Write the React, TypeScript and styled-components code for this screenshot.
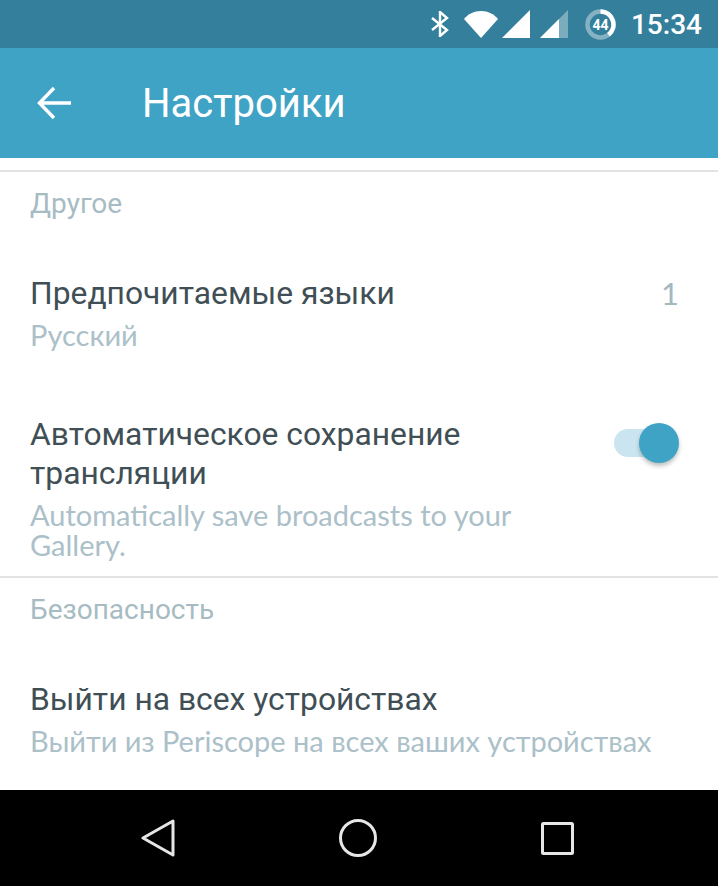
import React from "react";
import styled, { createGlobalStyle } from "styled-components";

const GlobalStyle = createGlobalStyle`
  html, body {
    margin: 0;
    padding: 0;
    background: #fff;
  }
`;

const Screen = styled.div`
  width: 718px;
  height: 886px;
  display: flex;
  flex-direction: column;
  overflow: hidden;
  font-family: Roboto, "Noto Sans", sans-serif;
`;

const StatusBar = styled.div`
  height: 48px;
  flex: none;
  display: flex;
  align-items: center;
  justify-content: flex-end;
  padding-right: 16px;
  background: #34809c;
  color: #fff;
`;

const StatusIcon = styled.svg<{ $gap: number }>`
  flex: none;
  display: block;
  margin-left: ${({ $gap }) => $gap}px;
`;

const Clock = styled.span`
  font-size: 28px;
  font-weight: 500;
  margin-left: 15px;
`;

const Toolbar = styled.header`
  height: 110px;
  flex: none;
  display: flex;
  align-items: center;
  background: #3fa3c5;
  color: #fff;
`;

const BackButton = styled.div`
  width: 142px;
  flex: none;
  display: flex;
  padding-left: 37px;
  box-sizing: border-box;
`;

const Title = styled.h1`
  margin: 0;
  font-size: 40px;
  font-weight: 400;
`;

const Content = styled.main`
  flex: 1;
  padding-top: 12px;
`;

const Section = styled.section`
  border-top: 2px solid #e2e4e4;
  padding: 0 30px;
`;

const SectionTitle = styled.div`
  height: 102px;
  padding-top: 15px;
  box-sizing: border-box;
  font-size: 28px;
  line-height: 34px;
  color: #a7bbc2;
`;

const Row = styled.div<{ $height: number }>`
  height: ${({ $height }) => $height}px;
  display: flex;
  justify-content: space-between;
`;

const RowText = styled.div<{ $wide?: boolean }>`
  width: ${({ $wide }) => ($wide ? "100%" : "530px")};
`;

const RowTitle = styled.div`
  font-size: 31.8px;
  line-height: 39px;
  color: #3f4f55;
`;

const RowHint = styled.div`
  font-family: Lato, Roboto, sans-serif;
  font-size: 29px;
  line-height: 30px;
  margin-top: 7px;
  color: #abc0c8;
`;

const Count = styled.div`
  font-family: Lato, Roboto, sans-serif;
  font-size: 31px;
  line-height: 39px;
  padding-right: 9px;
  color: #a3b8bf;
`;

const Toggle = styled.div`
  position: relative;
  width: 52px;
  height: 28px;
  margin: 14px 22px 0 0;
  border-radius: 14px;
  background: #cbe5f0;
`;

const Knob = styled.div`
  position: absolute;
  top: -6px;
  right: -13px;
  width: 40px;
  height: 40px;
  border-radius: 50%;
  background: #3fa3c5;
  box-shadow: 0 3px 4px rgba(0, 0, 0, 0.25);
`;

const NavBar = styled.nav`
  height: 96px;
  flex: none;
  display: flex;
  align-items: center;
  justify-content: space-between;
  padding: 0 144px 0 141px;
  background: #000;
`;

const Settings: React.FC = () => (
  <Content>
    <Section>
      <SectionTitle>Другое</SectionTitle>
      <Row $height={141}>
        <RowText>
          <RowTitle>Предпочитаемые языки</RowTitle>
          <RowHint>Русский</RowHint>
        </RowText>
        <Count>1</Count>
      </Row>
      <Row $height={161}>
        <RowText>
          <RowTitle>Автоматическое сохранение трансляции</RowTitle>
          <RowHint>Automatically save broadcasts to your Gallery.</RowHint>
        </RowText>
        <Toggle>
          <Knob />
        </Toggle>
      </Row>
    </Section>
    <Section>
      <SectionTitle>Безопасность</SectionTitle>
      <Row $height={109}>
        <RowText $wide>
          <RowTitle>Выйти на всех устройствах</RowTitle>
          <RowHint>Выйти из Periscope на всех ваших устройствах</RowHint>
        </RowText>
      </Row>
    </Section>
  </Content>
);

const App: React.FC = () => (
  <Screen>
    <GlobalStyle />
    <StatusBar>
      <StatusIcon $gap={0} width="18" height="26" viewBox="0 0 18 26" fill="none" stroke="#fff" strokeWidth="2.4">
        <path d="M1 7l15 12-7 6V1l7 6L1 19" />
      </StatusIcon>
      <StatusIcon $gap={15} width="34" height="27" viewBox="0 0 34 27" fill="#fff">
        <path d="M0 8C4 3 10 0 17 0s13 3 17 8L17 27z" />
      </StatusIcon>
      <StatusIcon $gap={4} width="28" height="28" viewBox="0 0 28 28" fill="#fff">
        <path d="M0 28L28 0v28z" />
      </StatusIcon>
      <StatusIcon $gap={10} width="28" height="28" viewBox="0 0 28 28">
        <path d="M0 28L28 0v28z" fill="#fff" fillOpacity="0.35" />
        <path d="M0 28L19 9v19z" fill="#fff" />
      </StatusIcon>
      <StatusIcon $gap={17} width="31" height="31" viewBox="0 0 31 31">
        <circle cx="15.5" cy="15.5" r="13" fill="none" stroke="#fff" strokeOpacity="0.4" strokeWidth="4.5" />
        <path d="M15.5 2.5a13 13 0 0 1 8 23.2" fill="none" stroke="#fff" strokeWidth="4.5" />
        <text x="15.5" y="20.5" textAnchor="middle" fontSize="14" fontWeight="700" fill="#fff" fontFamily="Roboto">
          44
        </text>
      </StatusIcon>
      <Clock>15:34</Clock>
    </StatusBar>
    <Toolbar>
      <BackButton>
        <svg width="34" height="34" viewBox="0 0 34 34" fill="none" stroke="#fff" strokeWidth="3.4">
          <path d="M34 17H3M17 2L2.5 17 17 32" />
        </svg>
      </BackButton>
      <Title>Настройки</Title>
    </Toolbar>
    <Settings />
    <NavBar>
      <svg width="34" height="38" viewBox="0 0 34 38" fill="none" stroke="#e6e6e6" strokeWidth="3" strokeLinejoin="round">
        <path d="M32 2v34L2 19z" />
      </svg>
      <svg width="38" height="38" viewBox="0 0 38 38" fill="none" stroke="#e6e6e6" strokeWidth="3">
        <circle cx="19" cy="19" r="17.5" />
      </svg>
      <svg width="33" height="33" viewBox="0 0 33 33" fill="none" stroke="#e6e6e6" strokeWidth="3" strokeLinejoin="round">
        <rect x="1.5" y="1.5" width="30" height="30" rx="1" />
      </svg>
    </NavBar>
  </Screen>
);

export default App;
